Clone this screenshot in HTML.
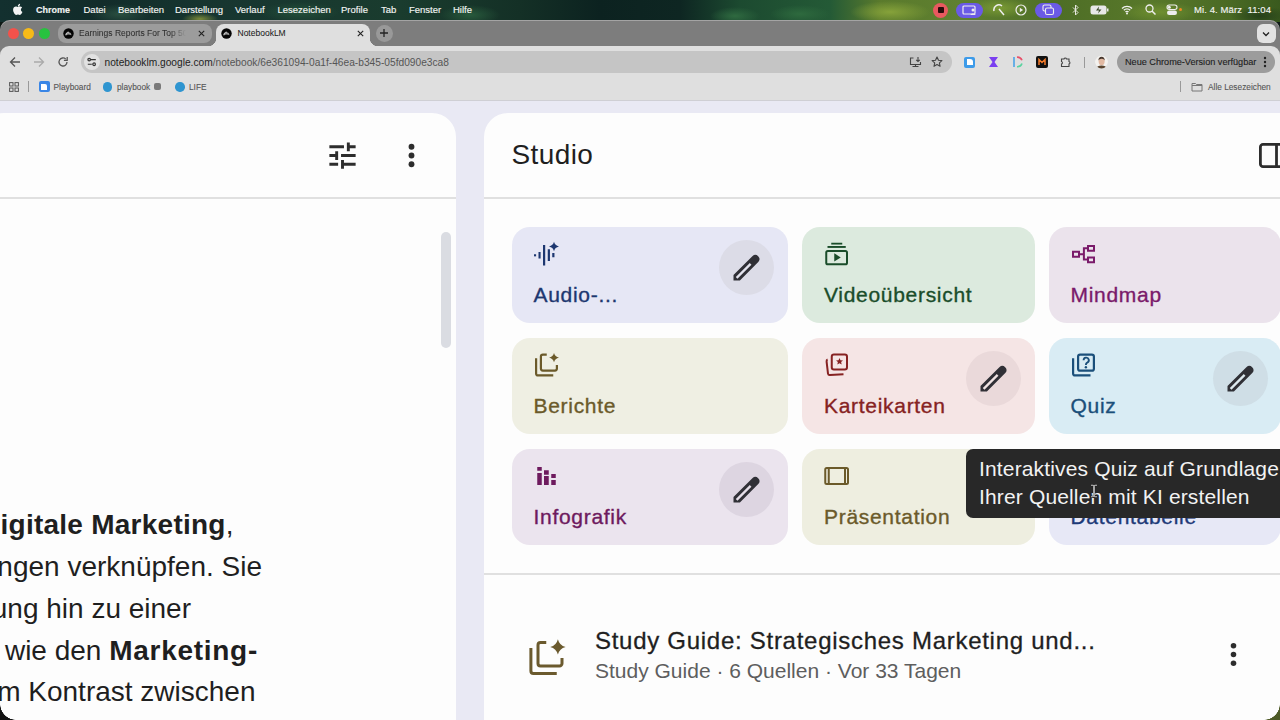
<!DOCTYPE html>
<html><head><meta charset="utf-8">
<style>
*{margin:0;padding:0;box-sizing:border-box}
html,body{width:1280px;height:720px;overflow:hidden;background:#0e1a16;font-family:"Liberation Sans",sans-serif}
.a{position:absolute}
.nw{white-space:nowrap}
#menubar{left:0;top:0;width:1280px;height:22px;
 background:
 radial-gradient(ellipse 18px 6px at 200px 19px,#7a8a3a 0,rgba(122,138,58,0) 100%),
 radial-gradient(ellipse 30px 10px at 120px 14px,#2a4f40 0,rgba(42,79,64,0) 100%),
 radial-gradient(ellipse 40px 10px at 300px 12px,#24503a 0,rgba(36,80,58,0) 100%),
 radial-gradient(ellipse 30px 10px at 470px 15px,#285a3c 0,rgba(40,90,60,0) 100%),
 radial-gradient(ellipse 25px 9px at 735px 16px,#2f6a40 0,rgba(47,106,64,0) 100%),
 radial-gradient(ellipse 30px 9px at 800px 14px,#2e6a3e 0,rgba(46,106,62,0) 100%),
 radial-gradient(ellipse 40px 11px at 890px 12px,#86a23a 0,rgba(134,162,58,0) 100%),
 radial-gradient(ellipse 30px 10px at 1000px 8px,#7a9a34 0,rgba(122,154,52,0) 100%),
 radial-gradient(ellipse 40px 10px at 1160px 12px,#6f8f30 0,rgba(111,143,48,0) 100%),
 radial-gradient(ellipse 30px 10px at 1260px 16px,#26401a 0,rgba(38,64,26,0) 100%),
 linear-gradient(90deg,#13302f 0px,#122c2a 100px,#173630 220px,#1a3c2e 400px,#143026 520px,#0c2220 600px,#0e2622 680px,#1c4a30 740px,#245a36 830px,#5a7a2c 880px,#5f8030 960px,#4e6e26 1060px,#58782a 1150px,#4a6a24 1230px,#3a5a1e 1280px)}
.mt{top:4px;color:#f2f4f2;font-size:9.5px;line-height:11px;-webkit-text-stroke:0.15px #f2f4f2}
#win{left:0;top:20px;width:1280px;height:700px;background:#7d7d7d;border-radius:10px 10px 0 0;overflow:hidden;box-shadow:inset 0 1px 0 rgba(255,255,255,0.3)}
#toolbar{left:0;top:46px;width:1280px;height:55px;background:#dfdfdf;border-radius:9px 9px 0 0;border-bottom:1px solid #cfcfd4}
#page{left:0;top:101px;width:1280px;height:619px;background:#e9e9f4}
.tl{width:11px;height:11px;border-radius:50%;top:28px}
.tabt{font-size:8.5px;color:#3a3a3a;line-height:12px;top:27px;-webkit-text-stroke:0.05px currentColor}
.bm{font-size:8.3px;color:#555;line-height:12px;top:81px;-webkit-text-stroke:0.1px currentColor}
.panel{background:#fdfdfd}
.card{border-radius:18px;height:96px}
.ct{font-size:21px;line-height:24px;-webkit-text-stroke:0.35px currentColor;letter-spacing:0.7px}
.ci{left:21px;top:14px}
.pen{width:55px;height:55px;border-radius:50%}
.lt{font-size:28px;line-height:42px;color:#1f1f1f;right:0;text-align:right}
</style></head><body>
<!-- menubar -->
<div id="menubar" class="a">
 <svg class="a" style="left:13px;top:3.3px" width="9.5" height="12" viewBox="0 0 384 480"><path fill="#f4f4f4" d="M318.700 268.700c-.2-36.700 16.400-64.400 50-84.800-18.800-26.900-47.200-41.700-84.700-44.600-35.500-2.800-74.300 20.700-88.500 20.700-15 0-49.400-19.700-76.400-19.700C63.300 141.200 4 184.800 4 273.500q0 39.300 14.400 81.200c12.800 36.700 59 126.700 107.200 125.200 25.200-.6 43-17.900 75.800-17.900 31.800 0 48.300 17.900 76.400 17.900 48.600-.7 90.400-82.500 102.600-119.300-65.200-30.700-61.700-90-61.700-91.900zm-56.600-164.200c27.300-32.400 24.800-61.900 24-72.500-24.100 1.400-52 16.400-67.900 34.900-17.500 19.800-27.800 44.300-25.600 71.900 26.100 2 49.900-11.400 69.500-34.300z"/></svg>
 <div class="a mt nw" style="left:36px;font-weight:bold;font-size:9px;top:4.9px">Chrome</div>
 <div class="a mt nw" style="left:83.5px">Datei</div>
 <div class="a mt nw" style="left:118px">Bearbeiten</div>
 <div class="a mt nw" style="left:175px">Darstellung</div>
 <div class="a mt nw" style="left:235px">Verlauf</div>
 <div class="a mt nw" style="left:277.5px">Lesezeichen</div>
 <div class="a mt nw" style="left:341px">Profile</div>
 <div class="a mt nw" style="left:381px">Tab</div>
 <div class="a mt nw" style="left:409px">Fenster</div>
 <div class="a mt nw" style="left:453px">Hilfe</div>
 <!-- status icons -->
 <div class="a" style="left:933px;top:2.5px;width:15px;height:15px;border-radius:50%;background:#e8595f"></div>
 <div class="a" style="left:937.5px;top:7px;width:6px;height:6px;background:#2a0c0c;border-radius:1px"></div>
 <div class="a" style="left:956px;top:2.5px;width:27px;height:15px;border-radius:8px;background:#6a5ae6"></div>
 <svg class="a" style="left:962px;top:5px" width="15" height="10" viewBox="0 0 15 10"><rect x="1" y="1" width="12" height="8" rx="1" fill="none" stroke="#eee" stroke-width="1.2"/><circle cx="11" cy="5" r="1.5" fill="#eee"/><path d="M8.500 10c0-2 5-2 5 0z" fill="#eee"/></svg>
 <svg class="a" style="left:992px;top:4px" width="13" height="12" viewBox="0 0 13 12"><path d="M2 7a5 5 0 0 1 8-5M7 5l5 6" fill="none" stroke="#eee" stroke-width="1.5"/></svg>
 <svg class="a" style="left:1015px;top:4px" width="12" height="12" viewBox="0 0 12 12"><circle cx="6" cy="6" r="5" fill="none" stroke="#eee" stroke-width="1.2"/><path d="M4.800 3.800v4.400l3.300-2.200z" fill="#eee"/></svg>
 <div class="a" style="left:1035px;top:2.5px;width:27px;height:15px;border-radius:8px;background:#6a5ae6"></div>
 <svg class="a" style="left:1042px;top:4px" width="13" height="12" viewBox="0 0 13 12"><rect x="1" y="1" width="8" height="6" rx="1.5" fill="none" stroke="#eee" stroke-width="1.1"/><rect x="3.500" y="4" width="8" height="6.500" rx="1.5" fill="#6a5ae6" stroke="#eee" stroke-width="1.1"/></svg>
 <svg class="a" style="left:1072px;top:4px" width="7" height="12" viewBox="0 0 7 12"><path d="M1 3.500l5 5-2.500 2.500V1l2.500 2.500-5 5" fill="none" stroke="#e8e8e0" stroke-width="1"/></svg>
 <svg class="a" style="left:1090px;top:5px" width="19" height="10" viewBox="0 0 19 10"><rect x="0.5" y="0.5" width="16" height="9" rx="2.500" fill="#e8e8e8"/><rect x="17" y="3.500" width="1.5" height="3" fill="#e8e8e8"/><path d="M9 1.500L6 5.500h3l-1 3 3.500-4h-3z" fill="#3a4a2a"/></svg>
 <svg class="a" style="left:1121px;top:4px" width="12" height="11" viewBox="0 0 12 11"><path d="M1 4.500a7 7 0 0 1 10 0M2.800 6.300a4.500 4.500 0 0 1 6.400 0M4.500 8a2 2 0 0 1 3 0" fill="none" stroke="#f0f0f0" stroke-width="1.3"/><circle cx="6" cy="9.500" r="1" fill="#f0f0f0"/></svg>
 <svg class="a" style="left:1145px;top:4px" width="11" height="12" viewBox="0 0 11 12"><circle cx="4.500" cy="4.500" r="3.500" fill="none" stroke="#eee" stroke-width="1.3"/><path d="M7 7l3.500 3.500" stroke="#eee" stroke-width="1.5"/></svg>
 <svg class="a" style="left:1166px;top:4px" width="12" height="12" viewBox="0 0 12 12"><rect x="1" y="1" width="10" height="4.500" rx="2.200" fill="none" stroke="#eee" stroke-width="1.1"/><rect x="1" y="6.500" width="10" height="4.500" rx="2.200" fill="#eee"/><circle cx="3.300" cy="3.200" r="1.500" fill="#eee"/></svg>
 <div class="a" style="left:1178.5px;top:8px;width:3px;height:3px;border-radius:50%;background:#f08a24"></div>
 <div class="a mt nw" style="left:1194px;letter-spacing:0.1px">Mi. 4. März&nbsp;&nbsp;11:04</div>
</div>

<!-- window -->
<div id="win" class="a">
 <div class="a tl" style="left:7.5px;top:7.5px;background:#f2524b"></div>
 <div class="a tl" style="left:23px;top:7.5px;background:#f7ba18"></div>
 <div class="a tl" style="left:38.5px;top:7.5px;background:#27c23f"></div>
</div>
<!-- inactive tab -->
<div class="a" style="left:57.5px;top:24px;width:154px;height:18.5px;border-radius:8px;background:#9c9c9c"></div>
<svg class="a" style="left:62.5px;top:27.5px" width="11" height="11" viewBox="0 0 11 11"><circle cx="5.5" cy="5.5" r="5.2" fill="#050505"/><path d="M2.6 7.2A2.9 2.9 0 0 1 8.4 7.2Q5.5 5.6 2.6 7.2Z" fill="#9a9a9a"/><path d="M3 7.3A2.6 2.6 0 0 1 6 4.2" fill="none" stroke="#d0d0d0" stroke-width="0.9"/></svg>
<div class="a tabt nw" style="left:79px;width:107px;overflow:hidden;color:#2e2e2e;-webkit-mask-image:linear-gradient(90deg,#000 85%,transparent 100%)">Earnings Reports For Top 50</div>
<svg class="a" style="left:197.5px;top:29.5px" width="7" height="7" viewBox="0 0 7 7"><path d="M.8.8l5.400 5.400M6.200.8L.8 6.200" stroke="#222" stroke-width="1.1"/></svg>
<!-- active tab -->
<div class="a" style="left:216px;top:24px;width:154px;height:23px;border-radius:8px 8px 0 0;background:#dfdfdf"></div>
<div class="a" style="left:208px;top:38px;width:8px;height:8px;background:radial-gradient(circle at 0 0,transparent 8px,#dfdfdf 8.500px)"></div>
<div class="a" style="left:370px;top:38px;width:8px;height:8px;background:radial-gradient(circle at 100% 0,transparent 8px,#dfdfdf 8.500px)"></div>
<svg class="a" style="left:221.1px;top:27.5px" width="11" height="11" viewBox="0 0 11 11"><circle cx="5.5" cy="5.5" r="5.2" fill="#050505"/><path d="M2.6 7.2A2.9 2.9 0 0 1 8.4 7.2Q5.5 5.6 2.6 7.2Z" fill="#9a9a9a"/><path d="M3 7.3A2.6 2.6 0 0 1 6 4.2" fill="none" stroke="#d0d0d0" stroke-width="0.9"/></svg>
<div class="a tabt nw" style="left:237.5px;color:#222">NotebookLM</div>
<svg class="a" style="left:356.5px;top:29.5px" width="7" height="7" viewBox="0 0 7 7"><path d="M.8.8l5.400 5.400M6.200.8L.8 6.200" stroke="#222" stroke-width="1.1"/></svg>
<div class="a" style="left:375.5px;top:24.5px;width:17px;height:17px;border-radius:50%;background:#999"></div>
<svg class="a" style="left:379px;top:28px" width="10" height="10" viewBox="0 0 10 10"><path d="M5 1v8M1 5h8" stroke="#222" stroke-width="1.3"/></svg>
<div class="a" style="left:1257px;top:24px;width:19px;height:18.5px;border-radius:6px;background:#e2e2e2"></div>
<svg class="a" style="left:1262.4px;top:30.5px" width="8" height="6" viewBox="0 0 8 6"><path d="M1 1.500l3 3 3-3" fill="none" stroke="#222" stroke-width="1.3"/></svg>

<!-- toolbar -->
<div id="toolbar" class="a"></div>
<svg class="a" style="left:9px;top:56px" width="12" height="12" viewBox="0 0 12 12"><path d="M11 6H1.500M6 1.500L1.500 6 6 10.500" fill="none" stroke="#555" stroke-width="1.3"/></svg>
<svg class="a" style="left:32.5px;top:56px" width="12" height="12" viewBox="0 0 12 12"><path d="M1 6h9.500M6 1.500L10.500 6 6 10.500" fill="none" stroke="#aaa" stroke-width="1.3"/></svg>
<svg class="a" style="left:56.5px;top:56px" width="12" height="12" viewBox="0 0 12 12"><path d="M10 6a4 4 0 1 1-1.200-2.900" fill="none" stroke="#555" stroke-width="1.3"/><path d="M10.200 1v3.300H6.900" fill="none" stroke="#555" stroke-width="1.3"/></svg>
<div class="a" style="left:81px;top:51px;width:871px;height:22px;border-radius:11px;background:#c5c5c5"></div>
<div class="a" style="left:83.5px;top:54px;width:16px;height:16px;border-radius:50%;background:#e2e2e2"></div>
<svg class="a" style="left:86.5px;top:57px" width="10" height="10" viewBox="0 0 10 10"><path d="M4 2.6h4.8M0.8 7.25h4" stroke="#333" stroke-width="1.2"/><circle cx="2.2" cy="2.6" r="1.3" fill="none" stroke="#333" stroke-width="1.2"/><circle cx="7.1" cy="7.25" r="1.3" fill="none" stroke="#333" stroke-width="1.2"/></svg>
<div class="a nw" style="left:104.5px;top:56.5px;font-size:10.2px;line-height:12px;color:#555"><span style="color:#1e1e1e">notebooklm.google.com</span>/notebook/6e361094-0a1f-46ea-b345-05fd090e3ca8</div>
<svg class="a" style="left:908.5px;top:56px" width="13" height="12" viewBox="0 0 13 12"><path d="M4.500 2H1.500v6.500h10V6M3.500 10.500h6M6.500 8.500v2" fill="none" stroke="#444" stroke-width="1.1"/><path d="M9 1v4.500M7.200 3.800L9 5.500l1.800-1.700" fill="none" stroke="#444" stroke-width="1.1"/></svg>
<svg class="a" style="left:931px;top:56px" width="12" height="12" viewBox="0 0 12 12"><path d="M6 1l1.500 3.200 3.400.4-2.500 2.300.7 3.400L6 8.600 3 10.300l.7-3.400L1.100 4.600l3.400-.4z" fill="none" stroke="#444" stroke-width="1.1" stroke-linejoin="round"/></svg>
<div class="a" style="left:964px;top:56.5px;width:11px;height:11px;border-radius:2px;background:#3d9be9"></div>
<div class="a" style="left:966.5px;top:59px;width:6px;height:6px;background:#fff;border-radius:0 3px 0 0"></div>
<svg class="a" style="left:988px;top:56px" width="11" height="12" viewBox="0 0 11 12"><path d="M1 1h9L6.500 6 10 11H1l3.500-5z" fill="#7a3ff0"/></svg>
<svg class="a" style="left:1012px;top:56px" width="12" height="12" viewBox="0 0 12 12"><path d="M2 1v10" stroke="#4aa3e8" stroke-width="1.6"/><path d="M5 1.200a5 5 0 0 1 5 3" stroke="#e8506a" stroke-width="1.6" fill="none"/><path d="M10 7.500a5 5 0 0 1-5 3.300" stroke="#5ad3a0" stroke-width="1.6" fill="none"/></svg>
<div class="a" style="left:1036px;top:56px;width:12px;height:12px;border-radius:2px;background:#111"></div>
<svg class="a" style="left:1038px;top:58px" width="8" height="8" viewBox="0 0 8 8"><path d="M1 7V1.500l3 3 3-3V7" fill="none" stroke="#f27a2a" stroke-width="1.500"/></svg>
<svg class="a" style="left:1060px;top:56px" width="12" height="12" viewBox="0 0 12 12"><path d="M1.500 3h2.500a1.300 1.300 0 0 1 2.500 0H9v2.500a1.300 1.300 0 0 1 0 2.500V10.500H1.500V8a1.300 1.300 0 0 0 0-2.500z" fill="none" stroke="#444" stroke-width="1.1"/></svg>
<div class="a" style="left:1083.5px;top:57px;width:1px;height:11px;background:#999"></div>
<svg class="a" style="left:1094px;top:54px" width="16" height="16" viewBox="0 0 16 16"><defs><clipPath id="av"><circle cx="7.5" cy="8" r="6.5"/></clipPath></defs><g clip-path="url(#av)"><circle cx="7.5" cy="8" r="6.5" fill="#f4f2ef"/><ellipse cx="7.6" cy="7.6" rx="3" ry="3.6" fill="#e2b9a2"/><path d="M4.4 6.4Q4.6 2.8 7.6 2.8Q10.6 2.8 10.8 6.6Q9.8 4.6 7.6 4.8Q5.2 4.8 4.4 6.4Z" fill="#4a3a30"/><path d="M2 15Q3 11.6 7.5 11.6Q12 11.6 13 15Z" fill="#5a4530"/></g></svg>
<div class="a" style="left:1117px;top:51px;width:158px;height:22px;border-radius:11px;background:#9c9c9c"></div>
<div class="a nw" style="left:1125px;top:56px;font-size:9.15px;line-height:12px;color:#1e1e1e;-webkit-text-stroke:0.12px #1e1e1e">Neue Chrome-Version verfügbar</div>
<svg class="a" style="left:1263px;top:56px" width="4" height="12" viewBox="0 0 4 12"><circle cx="2" cy="2" r="1.200" fill="#222"/><circle cx="2" cy="6" r="1.200" fill="#222"/><circle cx="2" cy="10" r="1.200" fill="#222"/></svg>
<!-- bookmarks -->
<svg class="a" style="left:8.5px;top:82px" width="10" height="10" viewBox="0 0 10 10"><rect x=".6" y=".6" width="3.400" height="3.400" fill="none" stroke="#555" stroke-width="1"/><rect x="6" y=".6" width="3.400" height="3.400" fill="none" stroke="#555" stroke-width="1"/><rect x=".6" y="6" width="3.400" height="3.400" fill="none" stroke="#555" stroke-width="1"/><rect x="6" y="6" width="3.400" height="3.400" fill="none" stroke="#555" stroke-width="1"/></svg>
<div class="a" style="left:28px;top:81px;width:1px;height:11px;background:#999"></div>
<div class="a" style="left:38.5px;top:81px;width:11px;height:11px;border-radius:2px;background:#3a86e6"></div>
<div class="a" style="left:41px;top:83.5px;width:6px;height:6px;background:#fff;border-radius:0 2px 0 0"></div>
<div class="a bm nw" style="left:53.5px">Playboard</div>
<div class="a" style="left:102.5px;top:82px;width:9.5px;height:9.5px;border-radius:50%;background:#2f95d0"></div>
<div class="a bm nw" style="left:117px">playbook</div>
<div class="a" style="left:154px;top:83px;width:7px;height:7px;border-radius:2px;background:#7a7a7a"></div>
<div class="a" style="left:175px;top:82px;width:9.5px;height:9.5px;border-radius:50%;background:#2f95d0"></div>
<div class="a bm nw" style="left:189px">LIFE</div>
<div class="a" style="left:1179.5px;top:81px;width:1px;height:11px;background:#999"></div>
<svg class="a" style="left:1191px;top:82px" width="12" height="10" viewBox="0 0 12 10"><path d="M1 1.500h3.500l1 1H11v6.500H1z" fill="none" stroke="#777" stroke-width="1"/><path d="M1 3.500h10" stroke="#777" stroke-width="1"/></svg>
<div class="a bm nw" style="left:1208px">Alle Lesezeichen</div>

<!-- page -->
<div id="page" class="a"></div>
<div class="a panel" style="left:-20px;top:113px;width:476px;height:640px;border-radius:24px"></div>
<div class="a panel" style="left:484px;top:113px;width:820px;height:640px;border-radius:24px"></div>
<div class="a" style="left:0;top:197px;width:456px;height:1.5px;background:#e0e0e0"></div>
<div class="a" style="left:484px;top:197px;width:796px;height:1.5px;background:#e0e0e0"></div>
<!-- left header icons -->
<svg class="a" style="left:324.500px;top:137.500px" width="35" height="35" viewBox="0 0 24 24"><path fill="#2d2d2d" d="M3 17v2h6v-2H3zM3 5v2h10V5H3zm10 16v-2h8v-2h-8v-2h-2v6h2zM7 9v2H3v2h4v2h2V9H7zm14 4v-2H11v2h10zm-6-4h2V7h4V5h-4V3h-2v6z"/></svg>
<svg class="a" style="left:393.500px;top:137.500px" width="35" height="35" viewBox="0 0 24 24"><circle cx="12" cy="6" r="2" fill="#2d2d2d"/><circle cx="12" cy="12" r="2" fill="#2d2d2d"/><circle cx="12" cy="18" r="2" fill="#2d2d2d"/></svg>
<div class="a" style="left:440.5px;top:232px;width:10px;height:116px;border-radius:5px;background:#dadce2"></div>
<!-- left text -->
<div class="a lt nw" style="top:504px;right:1046.5px"><b style="letter-spacing:0.25px">igitale Marketing</b>,</div>
<div class="a lt nw" style="top:546px;right:1018px">ngen verknüpfen. Sie</div>
<div class="a lt nw" style="top:588px;right:1089px">ung hin zu einer</div>
<div class="a lt nw" style="top:629.8px;right:1022px">&nbsp;wie den <b style="letter-spacing:0.72px">Marketing-</b></div>
<div class="a lt nw" style="top:671px;right:1024.5px">m Kontrast zwischen</div>

<!-- studio header -->
<div class="a nw" style="left:511.5px;top:139px;letter-spacing:0.4px;font-size:28px;line-height:32px;color:#1f1f1f">Studio</div>
<svg class="a" style="left:1258.9px;top:142.8px" width="30" height="26" viewBox="0 0 30 26"><rect x="1.4" y="1.4" width="30" height="22.2" rx="2.6" fill="none" stroke="#2d2d2d" stroke-width="2.8"/><path d="M17.5 1.4v22.2" stroke="#2d2d2d" stroke-width="2.8"/></svg>

<!-- cards -->
<div class="a card" style="left:512px;top:227px;width:276px;background:#e6e7f5"></div>
<div class="a card" style="left:802px;top:227px;width:233px;background:#dceade"></div>
<div class="a card" style="left:1049px;top:227px;width:232px;background:#ebe3ec"></div>
<div class="a card" style="left:512px;top:338px;width:276px;background:#efefe3"></div>
<div class="a card" style="left:802px;top:338px;width:233px;background:#f5e5e5"></div>
<div class="a card" style="left:1049px;top:338px;width:232px;background:#d9ecf4"></div>
<div class="a card" style="left:512px;top:449px;width:276px;background:#ebe4ee"></div>
<div class="a card" style="left:802px;top:449px;width:233px;background:#eeeee0"></div>
<div class="a card" style="left:1049px;top:449px;width:232px;background:#e7e8f6"></div>
<!-- icons -->
<svg class="a" style="left:528px;top:236px" width="36" height="36" viewBox="0 0 36 36"><g fill="#1d3770"><rect x="6" y="18.25" width="2.1" height="2.1"/><rect x="10.5" y="16" width="2.1" height="6.5"/><rect x="15" y="9" width="2.2" height="20.5"/><rect x="19.75" y="13.25" width="2.2" height="11.75"/><rect x="24.25" y="17" width="2.2" height="4.25"/><path d="M26 5.8Q26.9 9.6 31 10.5Q26.9 11.4 26 15.2Q25.1 11.4 21 10.5Q25.1 9.6 26 5.8Z"/></g></svg>
<svg class="a" style="left:818px;top:236px" width="36" height="36" viewBox="0 0 36 36"><g fill="#1a4d2a"><rect x="13.25" y="6.75" width="11" height="1.8"/><rect x="9.5" y="10" width="18.25" height="1.9"/><path d="M16.25 17.25v8.25l6.5-4.1z"/></g><rect x="8.25" y="15" width="20.75" height="13.25" rx="1.6" fill="none" stroke="#1a4d2a" stroke-width="2"/></svg>
<svg class="a" style="left:1065px;top:236px" width="36" height="36" viewBox="0 0 36 36"><g fill="none" stroke="#7a1a6a" stroke-width="2"><rect x="8" y="15.75" width="6" height="5"/><rect x="23" y="10" width="6" height="4.75"/><rect x="23" y="21.5" width="6" height="4.75"/><path d="M14 18.25h4.9M18.9 11.25v13.25M18.9 12.2h4.1M18.9 23.6h4.1"/></g></svg>

<svg class="a" style="left:528px;top:347px" width="36" height="36" viewBox="0 0 36 36"><g fill="none" stroke="#6b5a2a" stroke-width="2.2" stroke-linecap="butt"><path d="M8.1 11.25V26.4a2 2 0 0 0 2 2H25.25"/><path d="M18.75 7.6H14.9a2 2 0 0 0-2 2V21.6a2 2 0 0 0 2 2H26.9a2 2 0 0 0 2-2V18"/></g><path d="M26 6Q27 9.6 31 10.6Q27 11.6 26 15.25Q25 11.6 21.1 10.6Q25 9.6 26 6Z" fill="#6b5a2a"/></svg>
<svg class="a" style="left:818px;top:347px" width="36" height="36" viewBox="0 0 36 36"><g fill="none" stroke="#862222" stroke-width="2"><rect x="13.75" y="7.5" width="15.25" height="15" rx="2.2"/><path d="M9.6 12.5Q8.4 13 8.6 14.6L10 26.6Q10.3 28.2 12 28L25.5 27.2"/></g><path d="M21.5 11l1 2.3 2.5.2-1.9 1.6.6 2.5-2.2-1.35-2.2 1.35.6-2.5-1.9-1.6 2.5-.2z" fill="#862222"/></svg>
<svg class="a" style="left:1065px;top:347px" width="36" height="36" viewBox="0 0 36 36"><g fill="none" stroke="#1b4f7a" stroke-width="2.2"><rect x="13.1" y="7.6" width="15.8" height="16.1" rx="2"/><path d="M8.1 11.25V26.4a2 2 0 0 0 2 2H25.5"/><path d="M18.6 13.2a2.6 2.6 0 1 1 3.6 2.4c-1 .5-1.3 1-1.3 2.3" stroke-width="1.9"/></g><circle cx="20.9" cy="20.2" r="1.2" fill="#1b4f7a"/></svg>

<svg class="a" style="left:528px;top:458px" width="36" height="36" viewBox="0 0 36 36"><g fill="#6e1a5e"><rect x="9.25" y="9" width="4.5" height="3.75"/><rect x="9.25" y="15" width="4.5" height="12"/><rect x="16" y="12.25" width="4.75" height="4.5"/><rect x="16" y="18" width="4.75" height="9"/><rect x="23.25" y="16" width="4.5" height="4"/><rect x="23.25" y="22" width="4.5" height="5"/></g></svg>
<svg class="a" style="left:818px;top:458px" width="36" height="36" viewBox="0 0 36 36"><g fill="none" stroke="#6b5a2a" stroke-width="2"><rect x="7.25" y="10" width="22.75" height="16" rx="1.5"/><path d="M10.75 10v16M27 10v16"/></g></svg>
<div class="a ct nw" style="left:533.5px;top:283px;color:#1d3770">Audio-...</div>
<div class="a ct nw" style="left:824px;top:283px;color:#1a4d2a">Videoübersicht</div>
<div class="a ct nw" style="left:1070.5px;top:283px;color:#7a1a6a">Mindmap</div>
<div class="a ct nw" style="left:533.5px;top:394px;color:#6b5a2a">Berichte</div>
<div class="a ct nw" style="left:824px;top:394px;color:#862222">Karteikarten</div>
<div class="a ct nw" style="left:1070.5px;top:394px;color:#1b4f7a">Quiz</div>
<div class="a ct nw" style="left:533.5px;top:505px;color:#6e1a5e">Infografik</div>
<div class="a ct nw" style="left:824px;top:505px;color:#6b5a2a">Präsentation</div>
<div class="a ct nw" style="left:1070.5px;top:505px;color:#1e3a78">Datentabelle</div>

<!-- pencil buttons -->
<div class="a pen" style="left:719.0px;top:239.8px;background:#dcdce7"></div>
<svg class="a" style="left:726.0px;top:248.0px" width="40" height="40" viewBox="0 0 40 40"><path d="M7.5 32.5L7.5 27L26.6 7.9A4.2 4.2 0 0 1 32.5 13.8L13.9 32.5Z" fill="#303036"/><path d="M10.6 29.85L24.6 15.85" stroke="#e4e4ee" stroke-width="2.3"/></svg>
<div class="a pen" style="left:966.1px;top:351.1px;background:#ead9da"></div>
<svg class="a" style="left:973.1px;top:359.3px" width="40" height="40" viewBox="0 0 40 40"><path d="M7.5 32.5L7.5 27L26.6 7.9A4.2 4.2 0 0 1 32.5 13.8L13.9 32.5Z" fill="#303036"/><path d="M10.6 29.85L24.6 15.85" stroke="#f0e4e4" stroke-width="2.3"/></svg>
<div class="a pen" style="left:1212.8px;top:351.2px;background:#cfdee6"></div>
<svg class="a" style="left:1219.8px;top:359.4px" width="40" height="40" viewBox="0 0 40 40"><path d="M7.5 32.5L7.5 27L26.6 7.9A4.2 4.2 0 0 1 32.5 13.8L13.9 32.5Z" fill="#303036"/><path d="M10.6 29.85L24.6 15.85" stroke="#dde9ef" stroke-width="2.3"/></svg>
<div class="a pen" style="left:719.3px;top:462.2px;background:#ddd5e1"></div>
<svg class="a" style="left:726.3px;top:470.4px" width="40" height="40" viewBox="0 0 40 40"><path d="M7.5 32.5L7.5 27L26.6 7.9A4.2 4.2 0 0 1 32.5 13.8L13.9 32.5Z" fill="#303036"/><path d="M10.6 29.85L24.6 15.85" stroke="#e6dfe9" stroke-width="2.3"/></svg>

<!-- tooltip -->
<div class="a" style="left:966px;top:448.500px;width:330px;height:69px;border-radius:7px;background:#282828"></div>
<div class="a nw" style="left:979px;top:455px;font-size:21px;line-height:27.5px;letter-spacing:0.15px;color:#f2f2f2">Interaktives Quiz auf Grundlage<br>Ihrer Quellen mit KI erstellen</div>

<svg class="a" style="left:1089px;top:484px" width="10" height="14" viewBox="0 0 10 14"><path d="M2 1.2h2.2Q5 1.2 5 2.2V11.8Q5 12.8 4.2 12.8H2M8 1.2H5.8Q5 1.2 5 2.2V11.8Q5 12.8 5.8 12.8H8" fill="none" stroke="#111" stroke-width="2.2"/><path d="M2 1.2h2.2Q5 1.2 5 2.2V11.8Q5 12.8 4.2 12.8H2M8 1.2H5.8Q5 1.2 5 2.2V11.8Q5 12.8 5.8 12.8H8" fill="none" stroke="#d8d8d8" stroke-width="1"/></svg>
<div class="a" style="left:484px;top:573px;width:796px;height:1.5px;background:#e0e0e0"></div>
<!-- study guide -->
<svg class="a" style="left:520px;top:630px" width="54" height="54" viewBox="0 0 54 54"><g fill="none" stroke="#6b5a2e" stroke-width="3"><path d="M10.9 18V41a2.5 2.5 0 0 0 2.5 2.5H36.75"/><path d="M26.25 12.4H20.5a2.5 2.5 0 0 0-2.5 2.5V33.5a2.5 2.5 0 0 0 2.5 2.5H39.5a2.5 2.5 0 0 0 2.5-2.5V28.1"/></g><path d="M37.9 9.2Q39.4 15.4 45.6 16.9Q39.4 18.4 37.9 24.6Q36.4 18.4 30.2 16.9Q36.4 15.4 37.9 9.2Z" fill="#6b5a2e"/></svg>
<div class="a nw" style="left:595px;top:627px;font-size:24px;line-height:28px;letter-spacing:0.72px;color:#1f1f1f;-webkit-text-stroke:0.3px #1f1f1f">Study Guide: Strategisches Marketing und...</div>
<div class="a nw" style="left:595px;top:659px;font-size:21px;line-height:24px;color:#5e5e5e">Study Guide · 6 Quellen · Vor 33 Tagen</div>
<svg class="a" style="left:1215.7px;top:637px" width="35" height="35" viewBox="0 0 24 24"><circle cx="12" cy="6" r="1.900" fill="#2d2d2d"/><circle cx="12" cy="12" r="1.900" fill="#2d2d2d"/><circle cx="12" cy="18" r="1.900" fill="#2d2d2d"/></svg>

<!-- window bottom corners -->
<div class="a" style="left:0;top:704px;width:16px;height:16px;background:radial-gradient(circle at 100% 0,transparent 15.500px,#121212 16px)"></div>
<div class="a" style="left:1264px;top:704px;width:16px;height:16px;background:radial-gradient(circle at 0 0,transparent 15.500px,#4d5a26 16px)"></div>
</body></html>
